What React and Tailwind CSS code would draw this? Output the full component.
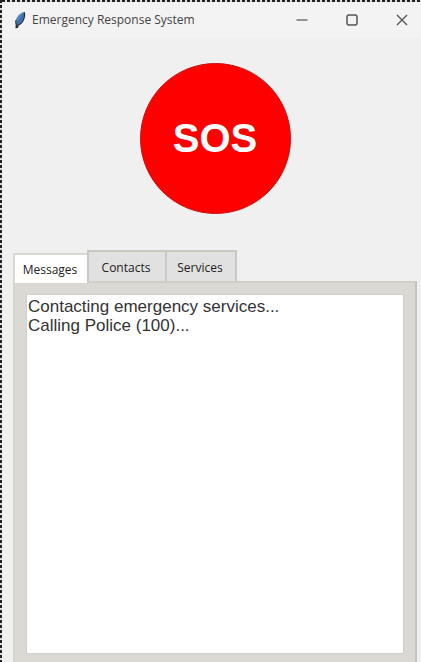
import React, { useState } from 'react';

const initialMessages = ['Contacting emergency services...', 'Calling Police (100)...'];

const tabs = [
  { name: 'Messages', width: 'w-[74px]' },
  { name: 'Contacts', width: 'w-[78px]' },
  { name: 'Services', width: 'w-[72px]' },
];

const FeatherIcon = () => (
  <svg viewBox="0 0 12 18" className="w-3 h-[18px]" aria-hidden="true">
    <path d="M10.200 1.200C7 1.600 3 5 2 9.200c-.5 2 0 3.600.3 4.600l-.2 2.800 1.400-.2.500-1.900c3.400-1.600 6-5.600 6.500-9.300.2-1.700.1-3.200-.3-4z" fill="#3f74b0" />
    <path d="M10.200 1.200C7 1.600 3 5 2 9.200c-.5 2 0 3.600.3 4.600C3.400 9.500 6 5 10.200 1.200z" fill="#5c8cbf" />
    <path d="M10.200 1.200c.4.800.5 2.300.3 4C10 8.900 7.400 12.900 4 14.500l-.5 1.900-1.400.2.200-2.800C2 12.800 1.500 11.200 2 9.200" fill="none" stroke="#23282f" strokeWidth="1.200" />
  </svg>
);

const TitleBar = () => (
  <header className="flex items-center h-9 pl-3 bg-[#f3f3f3] rounded-tl-lg">
    <FeatherIcon />
    <h1 className="ml-[6px] flex-1 font-['Open_Sans',sans-serif] text-[12px] leading-4 text-[#444444]">Emergency Response System</h1>
    <div className="flex gap-3 text-[#555555]">
      <button type="button" aria-label="Minimize" className="w-[38px] h-8 flex items-center justify-center">
        <svg viewBox="0 0 12 12" className="w-3 h-3" fill="none" stroke="currentColor" strokeWidth="1.2"><path d="M.5 6h11" /></svg>
      </button>
      <button type="button" aria-label="Maximize" className="w-[38px] h-8 flex items-center justify-center">
        <svg viewBox="0 0 12 12" className="w-3 h-3" fill="none" stroke="currentColor" strokeWidth="1.5"><rect x="1" y="1" width="10" height="10" rx="2" /></svg>
      </button>
      <button type="button" aria-label="Close" className="w-[38px] h-8 flex items-center justify-center">
        <svg viewBox="0 0 12 12" className="w-3 h-3" fill="none" stroke="currentColor" strokeWidth="1.4"><path d="M1 1l10 10M11 1L1 11" /></svg>
      </button>
    </div>
  </header>
);

const App = () => {
  const [active, setActive] = useState('Messages');
  const [messages, setMessages] = useState(initialMessages.join('\n'));

  return (
    <div className="min-h-screen flex bg-[#f0f0f0]">
      <div className="w-[2px] bg-[repeating-linear-gradient(to_bottom,#222222_0px,#222222_3px,#dddddd_3px,#dddddd_5px)]" />
      <div className="flex-1 flex flex-col">
        <div className="h-[2px] bg-[repeating-linear-gradient(to_right,#222222_0px,#222222_3px,#dddddd_3px,#dddddd_5px)]" />
        <TitleBar />

        <main className="flex-1 flex flex-col pl-[11px] pr-1">
          <button type="button" className="mt-[25px] mb-9 pb-[2px] self-center size-[151px] rounded-full bg-[#ff0000] border border-[#c81010] text-white font-['Liberation_Sans',sans-serif] font-bold text-[40px] leading-none">
            SOS
          </button>

          <div role="tablist" className="flex items-end h-[31px]">
            {tabs.map(({ name, width }) => (
              <button
                key={name}
                type="button"
                role="tab"
                aria-selected={active === name}
                onClick={() => setActive(name)}
                className={`${width} pr-[2px] border-t-2 border-l-2 font-['Open_Sans',sans-serif] text-[12px] leading-4 text-[#222222] ${
                  active === name ? 'z-10 h-[30px] -mb-[2px] pt-[2px] border-[#d8d7d0] bg-white' : 'h-[31px] pt-[2px] last:border-r-2 border-[#c9c8c1] bg-[#e1e1e1]'
                }`}
              >
                {name}
              </button>
            ))}
          </div>

          <div role="tabpanel" className="flex-1 flex flex-col px-[11px] pt-[11px] pb-2 bg-[#dad9d3] border-2 border-b-0 border-t-[#cfcec7] border-l-[#d4d3cc] border-r-[#c4c3bc]">
            <textarea
              aria-label={active}
              value={active === 'Messages' ? messages : ''}
              onChange={(e) => setMessages(e.target.value)}
              className="flex-1 block w-full resize-none outline-none bg-white border border-[#cfcfca] px-px pt-[2px] font-['Liberation_Sans',sans-serif] text-[17px] leading-[19px] text-[#333333]"
            />
          </div>
        </main>
      </div>
    </div>
  );
};

export default App;
